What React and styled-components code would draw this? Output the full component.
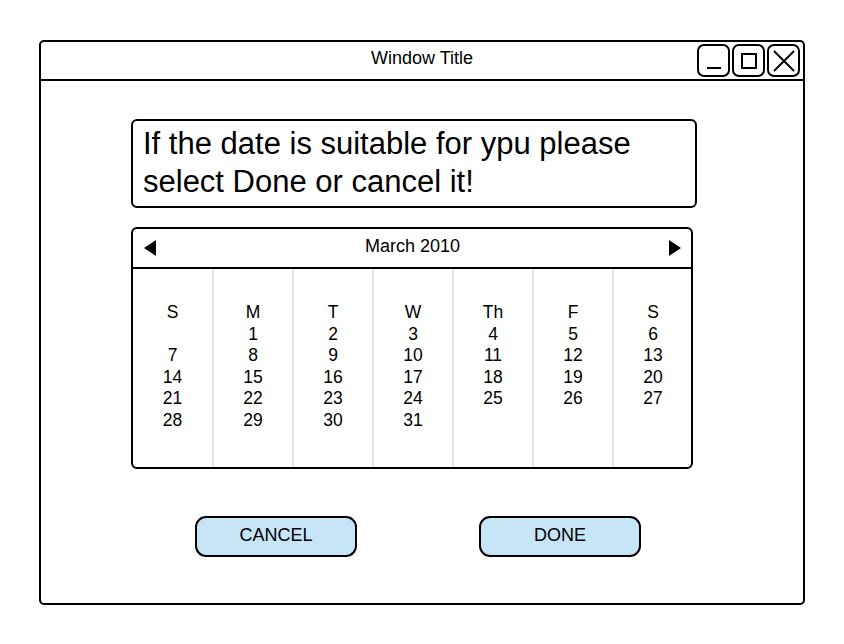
import React from "react"
import styled, { createGlobalStyle } from "styled-components"

const GlobalStyle = createGlobalStyle`
  html, body {
    margin: 0;
    padding: 0;
    background: #fff;
    font-family: "Liberation Sans", Arial, sans-serif;
    color: #000;
  }
`

const weeks = [
  ["S", "", "7", "14", "21", "28"],
  ["M", "1", "8", "15", "22", "29"],
  ["T", "2", "9", "16", "23", "30"],
  ["W", "3", "10", "17", "24", "31"],
  ["Th", "4", "11", "18", "25"],
  ["F", "5", "12", "19", "26"],
  ["S", "6", "13", "20", "27"],
]

const App = () => (
  <Page>
    <GlobalStyle />
    <Window>
      <TitleBar>
        <Title>Window Title</Title>
        <Controls>
          <ControlButton>
            <svg width="18" height="18" viewBox="0 0 18 18">
              <path d="M2 16h14" stroke="#000" strokeWidth="2" />
            </svg>
          </ControlButton>
          <ControlButton>
            <svg width="18" height="18" viewBox="0 0 18 18">
              <rect x="2" y="2" width="14" height="14" fill="none" stroke="#000" strokeWidth="2" />
            </svg>
          </ControlButton>
          <ControlButton>
            <svg width="22" height="22" viewBox="0 0 22 22">
              <path d="M1 1L21 21M21 1L1 21" stroke="#000" strokeWidth="2" />
            </svg>
          </ControlButton>
        </Controls>
      </TitleBar>
      <Body>
        <Message>
          If the date is suitable for ypu please
          <br />
          select Done or cancel it!
        </Message>
        <Calendar>
          <CalendarHeader>
            <Arrow $dir="left" />
            <Month>March 2010</Month>
            <Arrow $dir="right" />
          </CalendarHeader>
          <Days>
            {weeks.map((col, i) => (
              <DayColumn key={i}>
                {col.map((d, j) => (
                  <Day key={j}>{d || "\u00a0"}</Day>
                ))}
              </DayColumn>
            ))}
          </Days>
        </Calendar>
        <Actions>
          <ActionButton>CANCEL</ActionButton>
          <ActionButton>DONE</ActionButton>
        </Actions>
      </Body>
    </Window>
  </Page>
)

const Page = styled.div`
  width: 844px;
  height: 644px;
  padding: 40px 0 0 39px;
  box-sizing: border-box;
`

const Window = styled.div`
  width: 766px;
  height: 565px;
  box-sizing: border-box;
  border: 2px solid #000;
  border-radius: 5px;
  display: flex;
  flex-direction: column;
`

const TitleBar = styled.div`
  position: relative;
  height: 39px;
  box-sizing: border-box;
  border-bottom: 2px solid #000;
  display: flex;
  align-items: center;
  justify-content: center;
`

const Title = styled.div`
  font-size: 18px;
  margin-top: -5px;
`

const Controls = styled.div`
  position: absolute;
  right: 3px;
  top: 2px;
  display: flex;
  gap: 2px;
`

const ControlButton = styled.div`
  width: 33px;
  height: 33px;
  box-sizing: border-box;
  border: 2px solid #000;
  border-radius: 7px;
  display: flex;
  align-items: center;
  justify-content: center;
`

const Body = styled.div`
  display: flex;
  flex-direction: column;
  padding: 38px 0 0 90px;
`

const Message = styled.div`
  width: 566px;
  height: 89px;
  box-sizing: border-box;
  border: 2px solid #000;
  border-radius: 6px;
  padding: 4px 0 0 10px;
  font-size: 31px;
  line-height: 38px;
`

const Calendar = styled.div`
  margin-top: 19px;
  width: 562px;
  height: 242px;
  box-sizing: border-box;
  border: 2px solid #000;
  border-radius: 6px;
  display: flex;
  flex-direction: column;
  overflow: hidden;
`

const CalendarHeader = styled.div`
  height: 40px;
  box-sizing: border-box;
  border-bottom: 2px solid #000;
  display: flex;
  align-items: center;
  padding: 0 10px 0 11px;
`

const Month = styled.div`
  flex: 1;
  text-align: center;
  font-size: 18px;
  margin-top: -3px;
`

const Arrow = styled.div`
  width: 0;
  height: 0;
  border-top: 8px solid transparent;
  border-bottom: 8px solid transparent;
  ${(p) =>
    p.$dir === "left"
      ? "border-right: 12px solid #000;"
      : "border-left: 12px solid #000;"}
`

const Days = styled.div`
  flex: 1;
  display: grid;
  grid-template-columns: 79px repeat(6, 80px);
`

const DayColumn = styled.div`
  display: flex;
  flex-direction: column;
  align-items: center;
  padding-top: 33px;
  & + & {
    border-left: 2px solid #e2e2e2;
  }
`

const Day = styled.div`
  font-size: 17.5px;
  line-height: 21.6px;
`

const Actions = styled.div`
  display: flex;
  margin-top: 47px;
  padding-left: 64px;
  gap: 122px;
`

const ActionButton = styled.div`
  width: 162px;
  height: 41px;
  box-sizing: border-box;
  border: 2px solid #000;
  border-radius: 11px;
  background: #c6e5f7;
  display: flex;
  align-items: center;
  justify-content: center;
  font-size: 18px;
  padding-bottom: 3px;
`

export default App
